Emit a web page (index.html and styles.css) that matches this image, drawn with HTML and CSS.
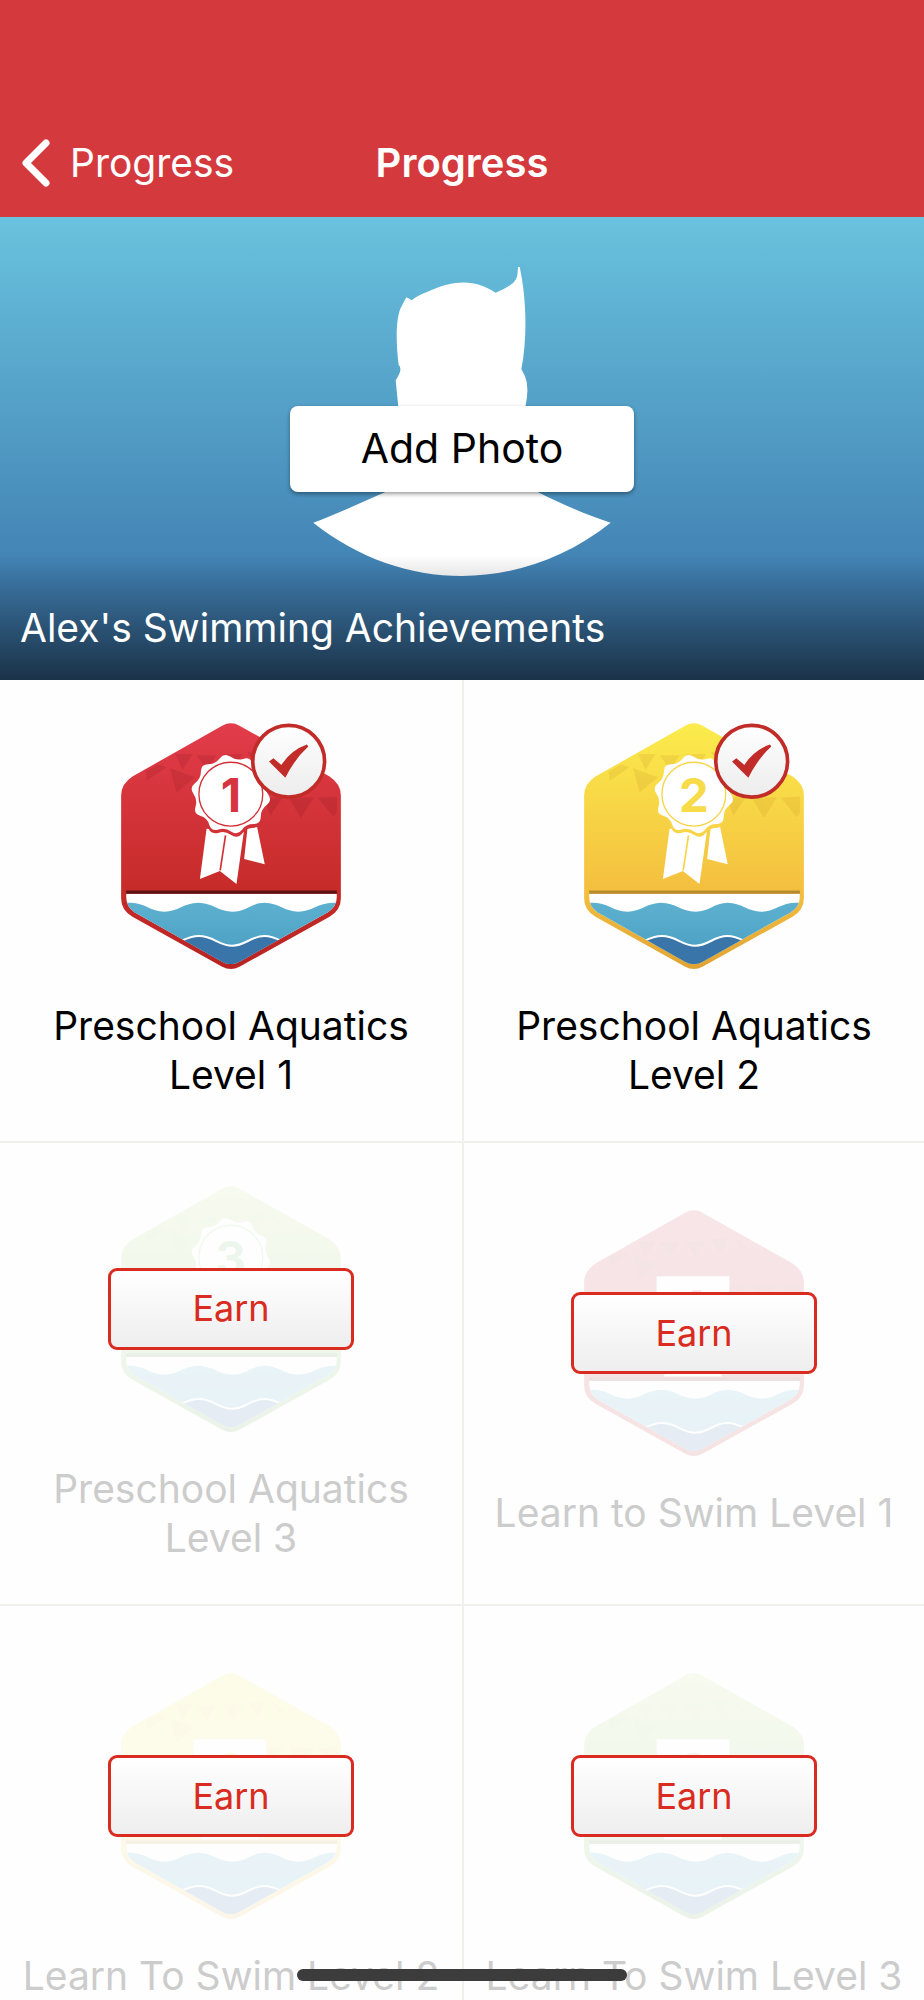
FILE: index.html
```
<!DOCTYPE html>
<html lang="en">
<head>
  <meta charset="UTF-8">
  <meta name="viewport" content="width=device-width, initial-scale=1.0">
  <title>Progress</title>
  <link rel="stylesheet" href="styles.css">
</head>
<body>
  <!-- Shared badge artwork -->
  <svg class="defs" aria-hidden="true">
    <defs>
      <linearGradient id="red" x1="0" y1="0" x2="0" y2="1">
        <stop offset="0" stop-color="#e23c4b"/>
        <stop offset=".68" stop-color="#c62b29"/>
        <stop offset="1" stop-color="#b82422"/>
      </linearGradient>
      <linearGradient id="yellow" x1="0" y1="0" x2="0" y2="1">
        <stop offset="0" stop-color="#fbec4c"/>
        <stop offset=".68" stop-color="#f4bf3f"/>
        <stop offset="1" stop-color="#e0a333"/>
      </linearGradient>
      <linearGradient id="green" x1="0" y1="0" x2="0" y2="1">
        <stop offset="0" stop-color="#cbe082"/>
        <stop offset=".4" stop-color="#9fd078"/>
        <stop offset="1" stop-color="#6cab57"/>
      </linearGradient>
      <linearGradient id="crimson" x1="0" y1="0" x2="0" y2="1">
        <stop offset="0" stop-color="#c8384e"/>
        <stop offset="1" stop-color="#bd2a2c"/>
      </linearGradient>
      <linearGradient id="lemon" x1="0" y1="0" x2="0" y2="1">
        <stop offset="0" stop-color="#fdf05a"/>
        <stop offset=".5" stop-color="#faea58"/>
        <stop offset="1" stop-color="#eebf50"/>
      </linearGradient>
      <linearGradient id="sea" x1="0" y1="0" x2="0" y2="1">
        <stop offset="0" stop-color="#5db0cf"/>
        <stop offset="1" stop-color="#459bbf"/>
      </linearGradient>
      <linearGradient id="disc" x1="0" y1="0" x2="0" y2="1">
        <stop offset="0" stop-color="#ffffff"/>
        <stop offset="1" stop-color="#ececec"/>
      </linearGradient>
      <clipPath id="hull">
        <path d="M78 581H712V590Q712 620 685 636L419 785Q393 799 367 785L103 636Q78 620 78 590Z"/>
      </clipPath>

      <path id="hexagon" d="M367 75Q393 60 419 75L690 228Q724 250 724 285V595Q724 630 690 650L419 800Q393 814 367 800L97 650Q63 630 63 595V285Q63 250 97 228Z"/>

      <g id="flags">
        <path d="M225 160L278 160L248 208ZM210 203L285 230L230 275ZM137 212L175 192L200 200L140 240ZM290 164L350 164L322 208ZM365 162L430 160L398 208ZM443 155L498 150L475 200ZM508 145L560 185L535 185Z"/>
        <path d="M490 292L550 290L512 345ZM567 292L643 290L604 352ZM655 292L712 288V335L702 350Z"/>
      </g>

      <g id="water">
        <path d="M78 571H712V581H78Z" fill="currentColor"/>
        <g clip-path="url(#hull)">
          <path d="M60 575H730V810H60Z" fill="#fff"/>
          <path d="M60 608H93C133 608 153 635 193 635S253 608 295 608S357 635 398 635S455 608 495 608S557 635 596 635S657 608 700 608H730V810H60Z" fill="url(#sea)"/>
          <path d="M193 738C233 738 253 708 297 708S357 737 397 737S452 708 494 708S556 738 596 738V830H193Z" fill="#3a75a9" stroke="#fff" stroke-width="6"/>
        </g>
      </g>

      <g id="rosette">
        <g fill="#fff">
          <path d="M320 385L300 536L360 512L410 551L432 395Z"/>
          <path d="M443 385L472 380L495 492L433 476Z"/>
        </g>
        <path d="M377 405L361 510" stroke="currentColor" stroke-width="5"/>
        <g transform="translate(393 281)">
          <use href="#scallop" y="6" fill="currentColor" stroke="currentColor" stroke-width="8" clip-path="url(#below)"/>
          <use href="#scallop" fill="#fff"/>
          <circle r="96" fill="none" stroke="currentColor" stroke-width="4"/>
        </g>
      </g>
      <clipPath id="below"><path d="M-80 70H80V150H-80Z"/></clipPath>
      <path id="scallop" d="M113 2Q125 20 108 33Q90 46 90 68Q90 90 68 90Q46 90 33 108Q20 125 2 113Q-16 100 -37 106Q-58 113 -65 92Q-71 71 -92 65Q-113 58 -106 37Q-100 16 -113 -2Q-125 -20 -108 -33Q-90 -46 -90 -68Q-90 -90 -68 -90Q-46 -90 -33 -108Q-20 -125 -2 -113Q16 -100 37 -106Q58 -113 65 -92Q71 -71 92 -65Q113 -58 106 -37Q100 -16 113 2Z"/>

      <path id="board" d="M281 266H500V420H281ZM304 500H476V568H304Z"/>

      <g id="check">
        <circle cx="567" cy="182" r="108" fill="url(#disc)" stroke="#c12c29" stroke-width="11"/>
        <path d="M508 183L521 173Q534 184 545 193Q575 148 622 132L626 138Q585 175 557 232Q535 210 508 183Z" fill="#c12c29"/>
      </g>
    </defs>
  </svg>

  <div class="app">
    <header class="navbar">
      <a class="back" href="#">
        <svg viewBox="0 0 28 48" aria-hidden="true"><path d="M24 4L4 24L24 44"/></svg>
        Progress
      </a>
      <h1>Progress</h1>
    </header>

    <main>
      <section class="hero">
        <svg class="avatar" viewBox="127 80 892 927" aria-hidden="true">
          <path d="M127 847C205 818 275 785 350 752L440 720C430 620 400 600 382 500L374 420Q390 395 388 385Q388 378 383 375C374 300 375 240 388 205Q396 190 406 171Q413 174 422 180Q440 165 468 155C560 112 620 122 674 157Q705 145 727 127C742 112 739 100 741 80H746C766 170 770 290 751 387Q756 395 762 408Q776 440 763 500C740 600 710 650 700 720L800 755C870 790 950 825 1019 847C750 1060 395 1060 127 847Z"/>
        </svg>
        <h2>Alex's Swimming Achievements</h2>
        <button type="button" class="add-photo">Add Photo</button>
      </section>

      <ul class="levels">
        <li>
          <div class="badge red">
            <svg viewBox="63 67 661 740" aria-hidden="true">
              <use href="#hexagon" fill="url(#red)"/>
              <use href="#flags" class="flags"/>
              <use href="#rosette" class="tint"/>
              <text x="393" y="335">1</text>
              <use href="#water"/>
              <use href="#check"/>
            </svg>
          </div>
          <p>Preschool Aquatics Level 1</p>
        </li>
        <li>
          <div class="badge yellow">
            <svg viewBox="63 67 661 740" aria-hidden="true">
              <use href="#hexagon" fill="url(#yellow)"/>
              <use href="#flags" class="flags"/>
              <use href="#rosette" class="tint"/>
              <text x="393" y="335">2</text>
              <use href="#water"/>
              <use href="#check"/>
            </svg>
          </div>
          <p>Preschool Aquatics Level 2</p>
        </li>
        <li class="locked">
          <div class="badge green">
            <svg viewBox="63 67 661 740" aria-hidden="true">
              <use href="#hexagon" fill="url(#green)"/>
              <use href="#flags" class="flags"/>
              <use href="#rosette" class="tint"/>
              <text x="393" y="335">3</text>
              <use href="#water"/>
            </svg>
            <button type="button" class="earn">Earn</button>
          </div>
          <p>Preschool Aquatics Level 3</p>
        </li>
        <li class="locked">
          <div class="badge red">
            <svg viewBox="63 67 661 740" aria-hidden="true">
              <use href="#hexagon" fill="url(#crimson)"/>
              <use href="#flags" class="flags"/>
              <use href="#board" fill="#fff"/>
              <text x="393" y="409">1</text>
              <use href="#water"/>
            </svg>
            <button type="button" class="earn">Earn</button>
          </div>
          <p>Learn to Swim Level 1</p>
        </li>
        <li class="locked">
          <div class="badge yellow">
            <svg viewBox="63 67 661 740" aria-hidden="true">
              <use href="#hexagon" fill="url(#lemon)"/>
              <use href="#flags" class="flags"/>
              <use href="#board" fill="#fff"/>
              <text x="393" y="409">2</text>
              <use href="#water"/>
            </svg>
            <button type="button" class="earn">Earn</button>
          </div>
          <p>Learn To Swim Level 2</p>
        </li>
        <li class="locked">
          <div class="badge green">
            <svg viewBox="63 67 661 740" aria-hidden="true">
              <use href="#hexagon" fill="url(#green)"/>
              <use href="#flags" class="flags"/>
              <use href="#board" fill="#fff"/>
              <text x="393" y="409">3</text>
              <use href="#water"/>
            </svg>
            <button type="button" class="earn">Earn</button>
          </div>
          <p>Learn To Swim Level 3</p>
        </li>
      </ul>
    </main>
  </div>

  <div class="home-indicator"></div>
</body>
</html>
```
FILE: styles.css
```
* {
  box-sizing: border-box;
}
body {
  margin: 0;
  font-family: Inter, "Liberation Sans", sans-serif;
  font-size: 39px;
  line-height: 49px;
  color: #000;
  background: #fefefe;
}
h1, h2, p, ul {
  margin: 0;
  padding: 0;
  font-size: inherit;
}
.defs {
  position: absolute;
  width: 0;
  height: 0;
}
.app {
  height: 100vh;
  display: flex;
  flex-direction: column;
}

/* Navigation bar */
.navbar {
  display: grid;
  grid-template-columns: 1fr auto 1fr;
  align-items: center;
  flex: none;
  height: 217px;
  padding: 108px 22px 0;
  color: #fff;
  background: #d4393e;
}
.back {
  display: flex;
  align-items: center;
  gap: 20px;
  color: inherit;
  text-decoration: none;
}
.back svg {
  width: 28px;
  height: 48px;
  fill: none;
  stroke: #fff;
  stroke-width: 7;
  stroke-linecap: round;
  stroke-linejoin: round;
}
.navbar h1 {
  font-size: 40px;
  font-weight: 600;
}

main {
  flex: 1;
  min-height: 0;
  overflow-y: auto;
  scrollbar-width: none;
}

/* Photo area: everything is stacked in one grid cell */
.hero {
  display: grid;
  height: 463px;
  background: linear-gradient(#69c2de, #4181b3 78%, #3f78ac);
}
.hero > * {
  grid-area: 1 / 1;
}
.avatar {
  width: 298px;
  height: 309px;
  margin-top: 50px;
  justify-self: center;
  fill: #fff;
}
.hero h2 {
  align-self: end;
  padding: 48px 20px 28px;
  font-weight: 400;
  color: #fff;
  background: linear-gradient(rgba(0, 0, 0, 0), rgba(0, 0, 0, .58));
}
.add-photo {
  place-self: center;
  width: 344px;
  height: 86px;
  border: none;
  border-radius: 8px;
  font: inherit;
  font-size: 41px;
  color: #000;
  background: #fff;
  box-shadow: 0 2px 4px rgba(0, 0, 0, .4);
}

/* Levels */
.levels {
  display: grid;
  grid-template-columns: 1fr 1fr;
  list-style: none;
}
.levels li {
  display: flex;
  flex-direction: column;
  align-items: center;
  justify-content: center;
  gap: 32px;
  height: 463px;
  border-bottom: 2px solid #f0f0ed;
  text-align: center;
}
.levels li:nth-child(even) {
  border-left: 2px solid #f0f0ed;
}
.levels p {
  max-width: 430px;
}
.badge {
  display: grid;
  place-items: center;
}
.badge > * {
  grid-area: 1 / 1;
}
.badge svg {
  width: 220px;
  height: 246px;
}
.badge text {
  font-family: Inter, sans-serif;
  font-size: 142px;
  font-weight: 700;
  text-anchor: middle;
}
.flags {
  opacity: .16;
}
.red { color: #5e1414; }
.red text { fill: #d63440; }
.red .tint { color: #d23138; }
.red .flags { fill: #7a1218; }
.yellow { color: #b78a30; }
.yellow text { fill: #f8db48; }
.yellow .tint { color: #f8d548; }
.yellow .flags { fill: #c08a20; }
.green { color: #57894a; }
.green text,
.green .flags { fill: #7cc070; }
.green .tint { color: #a8d480; }

.locked p {
  color: #ccc;
}
.locked svg {
  opacity: .12;
}
.earn {
  z-index: 1;
  width: 246px;
  height: 82px;
  border: 3px solid #d92b20;
  border-radius: 9px;
  font: inherit;
  font-size: 36px;
  color: #d92b20;
  background: linear-gradient(#fff, #eee);
}

.home-indicator {
  position: fixed;
  bottom: 19px;
  left: 50%;
  z-index: 2;
  width: 330px;
  height: 12px;
  border-radius: 6px;
  background: #3c3c3c;
  transform: translateX(-50%);
}
```
